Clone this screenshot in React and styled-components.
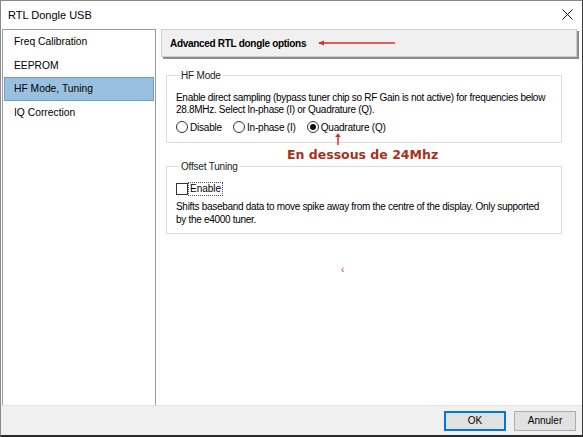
import React from "react";
import styled, { createGlobalStyle } from "styled-components";

const Global = createGlobalStyle`
  html, body { margin: 0; padding: 0; background: #fff; }
  body { font-family: "Liberation Sans", Arial, sans-serif; font-size: 10px; color: #000; }
`;

const Window = styled.div`
  width: 583px;
  height: 437px;
  box-sizing: border-box;
  border: 1px solid #8a8a8a;
  border-right-color: #3a3a3a;
  border-bottom: 2px solid #2a2a2a;
  display: flex;
  flex-direction: column;
  background: #fff;
  overflow: hidden;
`;

const TitleBar = styled.div`
  height: 27px;
  display: flex;
  align-items: center;
  justify-content: space-between;
  padding: 0 8px 0 7px;
  font-size: 11px;
`;

const CloseX = styled.svg`
  width: 11px;
  height: 11px;
  margin-right: 1px;
`;

const Body = styled.div`
  flex: 1;
  display: flex;
  padding: 1px 0 0 1px;
  min-height: 0;
`;

const List = styled.div`
  width: 154px;
  flex-shrink: 0;
  height: 377px;
  box-sizing: border-box;
  border: 1px solid #9a9a9a;
  display: flex;
  flex-direction: column;
`;

const Item = styled.div`
  height: 23.5px;
  margin: 0 1px;
  display: flex;
  align-items: center;
  padding-left: 9px;
  font-size: 10.3px;
  box-sizing: border-box;
  background: ${(p) => (p.$selected ? "#99c0df" : "transparent")};
  border: 1px solid ${(p) => (p.$selected ? "#6e9ec4" : "transparent")};
`;

const Main = styled.div`
  flex: 1;
  min-width: 0;
  display: flex;
  flex-direction: column;
  padding: 0 5px 0 5px;
`;

const Header = styled.div`
  height: 28px;
  box-sizing: border-box;
  background: #f0f0f0;
  border: 1px solid #cfcfcf;
  box-shadow: 2px 2px 0 #8c8c8c;
  display: flex;
  align-items: center;
  padding-left: 8px;
  font-weight: 700;
  font-size: 10px;
  letter-spacing: -0.3px;
  gap: 12px;
`;

const Group = styled.fieldset`
  margin: ${(p) => p.$m || "9px 15px 0 0"};
  border: 1px solid #dcdcdc;
  padding: ${(p) => p.$p || "3px 9px 9px 9px"};
  min-width: 0;
`;

const Legend = styled.legend`
  padding: 0 2px;
  margin-left: 3px;
  font-size: 10px;
  color: #222;
  letter-spacing: -0.2px;
`;

const Para = styled.p`
  margin: ${(p) => p.$m || "0"};
  line-height: ${(p) => p.$lh || "12px"};
  font-size: 10px;
  letter-spacing: -0.3px;
  white-space: nowrap;
`;

const RadioRow = styled.div`
  display: flex;
  gap: 11px;
  margin-top: 5px;
  align-items: center;
  letter-spacing: -0.2px;
`;

const RadioLabel = styled.label`
  display: flex;
  align-items: center;
  gap: 2px;
  font-size: 10px;
`;

const RadioCircle = styled.span`
  width: 12px;
  height: 12px;
  border: 1px solid #333;
  border-radius: 50%;
  box-sizing: border-box;
  display: inline-flex;
  align-items: center;
  justify-content: center;
  &::after {
    content: "";
    width: 6px;
    height: 6px;
    border-radius: 50%;
    background: ${(p) => (p.$on ? "#111" : "transparent")};
  }
`;

const Annotation = styled.div`
  position: relative;
  height: 18px;
`;

const UpArrow = styled.svg`
  position: absolute;
  left: 174px;
  top: -10px;
`;

const RedNote = styled.div`
  color: #a8301a;
  font-family: "DejaVu Sans", "Noto Sans", sans-serif;
  font-weight: 700;
  font-size: 12.5px;
  padding-left: 126px;
  padding-top: 4px;
`;

const CheckRow = styled.div`
  display: flex;
  align-items: center;
  margin-top: 8px;
  gap: 1px;
`;

const CheckBox = styled.span`
  width: 12px;
  height: 12px;
  border: 1px solid #333;
  box-sizing: border-box;
  display: inline-block;
`;

const FocusText = styled.span`
  outline: 1px dotted #555;
  padding: 0 1px;
  line-height: 12px;
`;

const Stray = styled.div`
  color: #c0392b;
  font-size: 10px;
  padding: 30px 0 0 180px;
`;

const Footer = styled.div`
  height: 29px;
  background: #f0f0f0;
  border-top: 1px solid #e3e3e3;
  display: flex;
  justify-content: flex-end;
  align-items: center;
  gap: 8px;
  padding-right: 6px;
  margin-top: auto;
`;

const Button = styled.button`
  width: 62px;
  height: 20px;
  box-sizing: border-box;
  background: #e1e1e1;
  border: 1px solid ${(p) => (p.$default ? "#0078d7" : "#adadad")};
  box-shadow: ${(p) => (p.$default ? "inset 0 0 0 1px #0078d7" : "none")};
  font-family: inherit;
  font-size: 10px;
  color: #000;
  padding: 0;
`;

export default function App() {
  return (
    <>
      <Global />
      <Window>
        <TitleBar>
          <span>RTL Dongle USB</span>
          <CloseX viewBox="0 0 11 11">
            <path d="M0.5 0.5 L10.5 10.5 M10.5 0.5 L0.5 10.5" stroke="#111" strokeWidth="1" />
          </CloseX>
        </TitleBar>
        <Body>
          <List>
            <Item>Freq Calibration</Item>
            <Item>EEPROM</Item>
            <Item $selected>HF Mode, Tuning</Item>
            <Item>IQ Correction</Item>
          </List>
          <Main>
            <Header>
              <span>Advanced RTL dongle options</span>
              <svg width="78" height="6" viewBox="0 0 78 6">
                <path d="M1 3 L77 3" stroke="#d6302a" strokeWidth="1.5" />
                <path d="M0 3 L6 0.5 L6 5.5 Z" fill="#d6302a" />
              </svg>
            </Header>
            <Group $m="13px 15px 0 5px">
              <Legend>HF Mode</Legend>
              <Para $m="8px 0 0 0">
                Enable direct sampling (bypass tuner chip so RF Gain is not active) for frequencies below
                <br />
                28.8MHz. Select In-phase (I) or Quadrature (Q).
              </Para>
              <RadioRow>
                <RadioLabel><RadioCircle />Disable</RadioLabel>
                <RadioLabel><RadioCircle />In-phase (I)</RadioLabel>
                <RadioLabel><RadioCircle $on />Quadrature (Q)</RadioLabel>
              </RadioRow>
            </Group>
            <Annotation>
              <UpArrow width="6" height="12" viewBox="0 0 6 12">
                <path d="M3 2 L3 12" stroke="#d6302a" strokeWidth="1.5" />
                <path d="M3 0 L5.8 4 L0.2 4 Z" fill="#d6302a" />
              </UpArrow>
              <RedNote>En dessous de 24Mhz</RedNote>
            </Annotation>
            <Group $m="0 15px 0 5px" $p="3px 9px 7px 9px">
              <Legend>Offset Tuning</Legend>
              <CheckRow>
                <CheckBox />
                <FocusText>Enable</FocusText>
              </CheckRow>
              <Para $m="5px 0 0 0" $lh="13px">
                Shifts baseband data to move spike away from the centre of the display. Only supported
                <br />
                by the e4000 tuner.
              </Para>
            </Group>
            <Stray>‹</Stray>
          </Main>
        </Body>
        <Footer>
          <Button $default>OK</Button>
          <Button>Annuler</Button>
        </Footer>
      </Window>
    </>
  );
}
